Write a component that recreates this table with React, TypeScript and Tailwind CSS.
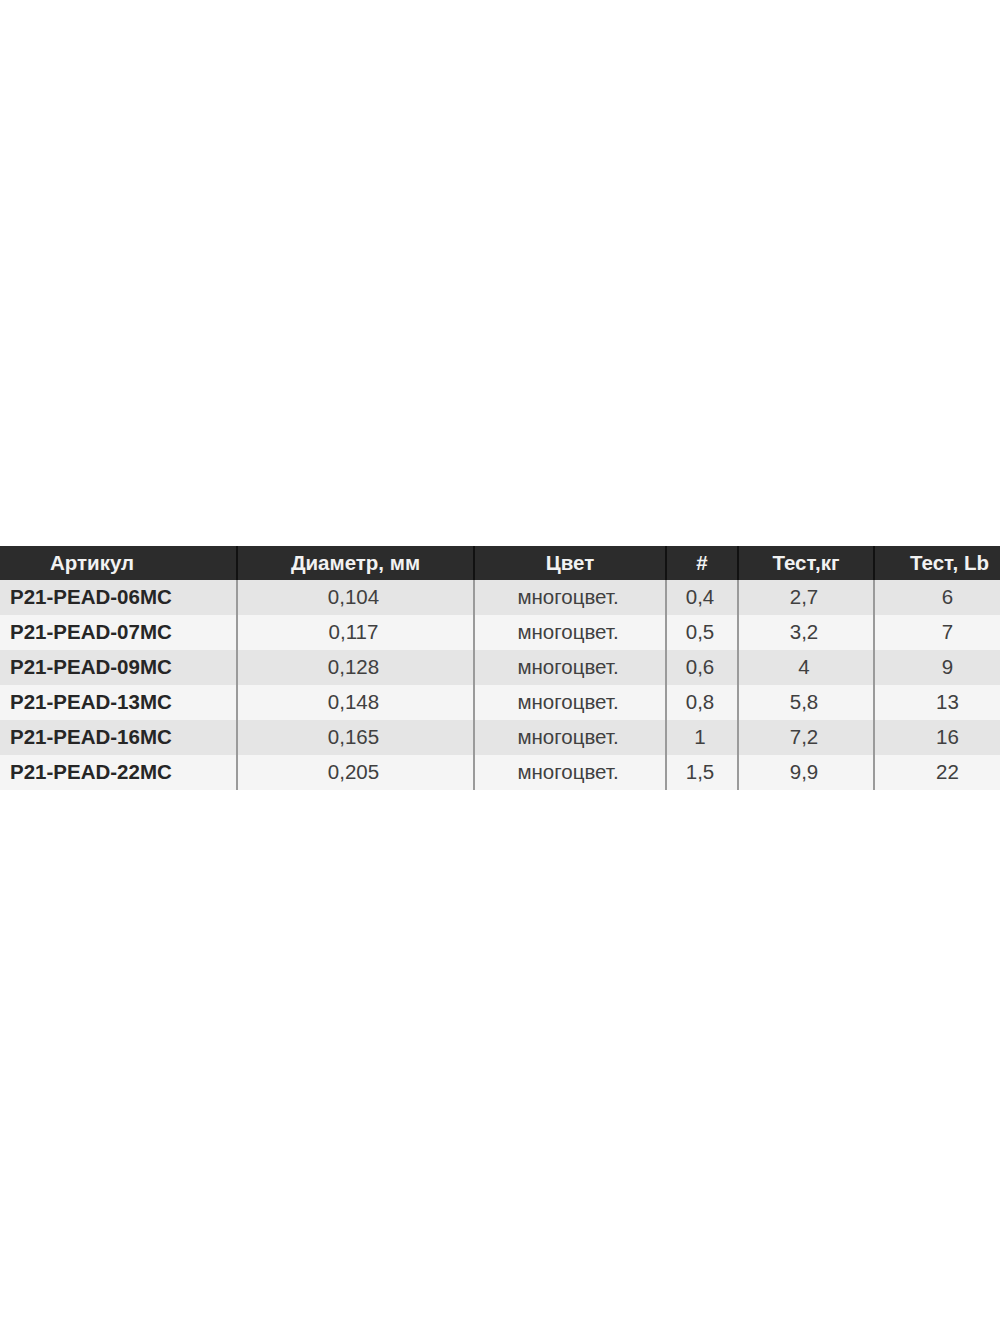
const headers = ["Артикул", "Диаметр, мм", "Цвет", "#", "Тест,кг", "Тест, Lb"]

const rows = [
  ["P21-PEAD-06MC", "0,104", "многоцвет.", "0,4", "2,7", "6"],
  ["P21-PEAD-07MC", "0,117", "многоцвет.", "0,5", "3,2", "7"],
  ["P21-PEAD-09MC", "0,128", "многоцвет.", "0,6", "4", "9"],
  ["P21-PEAD-13MC", "0,148", "многоцвет.", "0,8", "5,8", "13"],
  ["P21-PEAD-16MC", "0,165", "многоцвет.", "1", "7,2", "16"],
  ["P21-PEAD-22MC", "0,205", "многоцвет.", "1,5", "9,9", "22"],
]

export default function App() {
  return (
    <div className="w-[1000px] h-[1333px] bg-white overflow-hidden pt-[546px] font-['Liberation_Sans',Arial,sans-serif]">
      <div className="w-[1024px]">
        {/* Header */}
        <div className="grid grid-cols-[238px_237px_192px_72px_136px_1fr] h-[34px] bg-[#2c2c2c] text-[#f2f2f2] text-[20.5px] font-bold">
          {headers.map((h, i) => (
            <div
              key={h}
              className={`flex items-center ${i === 0 ? "pl-[50px]" : "justify-center"} ${i < 5 ? "border-r-2 border-[#111]" : ""}`}
            >
              {h}
            </div>
          ))}
        </div>

        {/* Body */}
        {rows.map((r, ri) => (
          <div
            key={r[0]}
            className={`grid grid-cols-[238px_237px_192px_72px_136px_1fr] h-[35px] text-[20.5px] ${ri % 2 === 0 ? "bg-[#e5e5e5]" : "bg-[#f5f5f5]"}`}
          >
            {r.map((c, ci) => (
              <div
                key={ci}
                className={`flex items-center ${ci === 0 ? "pl-[10px] font-bold text-[#262626]" : "justify-center pr-[4px] text-[#404040]"} ${ci < 5 ? "border-r-2 border-[#9a9a9a]" : ""}`}
              >
                {c}
              </div>
            ))}
          </div>
        ))}
      </div>
    </div>
  )
}
